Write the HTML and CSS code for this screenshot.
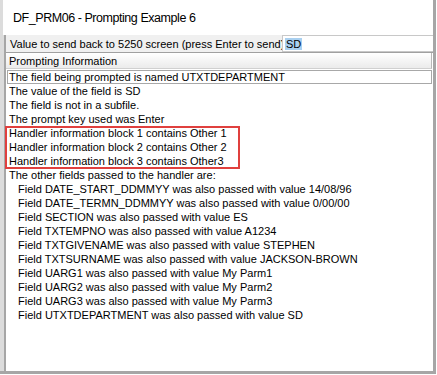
FILE: index.html
```html
<!DOCTYPE html>
<html>
<head>
<meta charset="utf-8">
<link rel="stylesheet" href="styles.css">
</head>
<body>
<div class="win">
  <div class="titlebar">DF_PRM06 - Prompting Example 6</div>
  <div class="client">
    <div class="valrow">
      <div class="label">Value to send back to 5250 screen (press Enter to send)</div>
      <div class="input"><span class="sel">SD</span></div>
    </div>
    <div class="list">
      <div class="hdr">Prompting Information</div>
      <div class="rows">
        <div class="row focus">The field being prompted is named UTXTDEPARTMENT</div>
        <div class="row">The value of the field is SD</div>
        <div class="row">The field is not in a subfile.</div>
        <div class="row">The prompt key used was Enter</div>
        <div class="hl">
          <div class="row">Handler information block 1 contains Other 1</div>
          <div class="row">Handler information block 2 contains Other 2</div>
          <div class="row">Handler information block 3 contains Other3</div>
        </div>
        <div class="row">The other fields passed to the handler are:</div>
        <div class="row ind">Field DATE_START_DDMMYY was also passed with value 14/08/96</div>
        <div class="row ind">Field DATE_TERMN_DDMMYY was also passed with value 0/00/00</div>
        <div class="row ind">Field SECTION was also passed with value ES</div>
        <div class="row ind">Field TXTEMPNO was also passed with value A1234</div>
        <div class="row ind">Field TXTGIVENAME was also passed with value STEPHEN</div>
        <div class="row ind">Field TXTSURNAME was also passed with value JACKSON-BROWN</div>
        <div class="row ind">Field UARG1 was also passed with value My Parm1</div>
        <div class="row ind">Field UARG2 was also passed with value My Parm2</div>
        <div class="row ind">Field UARG3 was also passed with value My Parm3</div>
        <div class="row ind">Field UTXTDEPARTMENT was also passed with value SD</div>
      </div>
    </div>
  </div>
</div>
</body>
</html>
```
FILE: styles.css
```css
html, body {
  margin: 0;
  padding: 0;
  background: #ffffff;
}
body {
  width: 437px;
  height: 375px;
  overflow: hidden;
  font-family: "Liberation Sans", Arial, sans-serif;
  font-size: 11px;
  color: #000;
}
.win {
  width: 436px;
  height: 374px;
  box-sizing: border-box;
  display: flex;
  flex-direction: column;
  background: #dcdcdc;
  padding-left: 4px;
  border-right: 3px solid #a6a6a6;
  border-bottom: 3px solid #a6a6a6;
}
.titlebar {
  height: 35px;
  flex: none;
  background: #ffffff;
  margin-left: -1px;
  padding-left: 10px;
  display: flex;
  align-items: center;
  font-size: 12.5px;
  letter-spacing: -0.45px;
  color: #000;
  padding-top: 1px;
  box-sizing: border-box;
}
.client {
  flex: 1;
  display: flex;
  flex-direction: column;
  border-left: 2px solid #a6a6a6;
  background: #f0f0f0;
  min-height: 0;
}
.valrow {
  height: 17px;
  flex: none;
  display: flex;
  align-items: center;
}
.label {
  width: 276px;
  padding-left: 4px;
  white-space: nowrap;
  overflow: hidden;
  box-sizing: border-box;
}
.input {
  flex: 1;
  height: 17px;
  box-sizing: border-box;
  background: #fff;
  border: 1px solid #c8c8c8;
  border-right: none;
  display: flex;
  align-items: center;
  padding-left: 2px;
}
.sel {
  background: #a9d0f0;
  padding: 0 1px;
  line-height: 12px;
}
.list {
  flex: 1;
  display: flex;
  flex-direction: column;
  background: #fff;
  border-top: 1px solid #a0a0a0;
  min-height: 0;
}
.hdr {
  height: 16px;
  flex: none;
  box-sizing: border-box;
  padding-left: 3px;
  display: flex;
  align-items: center;
  background: linear-gradient(#ffffff, #ebebeb);
  border-bottom: 1px solid #d0d0d0;
  border-right: 1px solid #b8b8b8;
  margin-right: 1px;
}
.rows {
  padding-left: 1px;
  padding-right: 1px;
  padding-top: 1px;
}
.row {
  height: 14px;
  line-height: 14px;
  padding-left: 2px;
  white-space: nowrap;
}
.focus {
  box-shadow: inset 0 0 0 1px #a8a8a8;
}
.ind {
  padding-left: 11px;
}
.hl {
  position: relative;
}
.hl::after {
  content: "";
  position: absolute;
  left: -2px;
  top: 0;
  width: 235px;
  height: 43px;
  box-sizing: border-box;
  border: 2px solid #e0403e;
}
```
